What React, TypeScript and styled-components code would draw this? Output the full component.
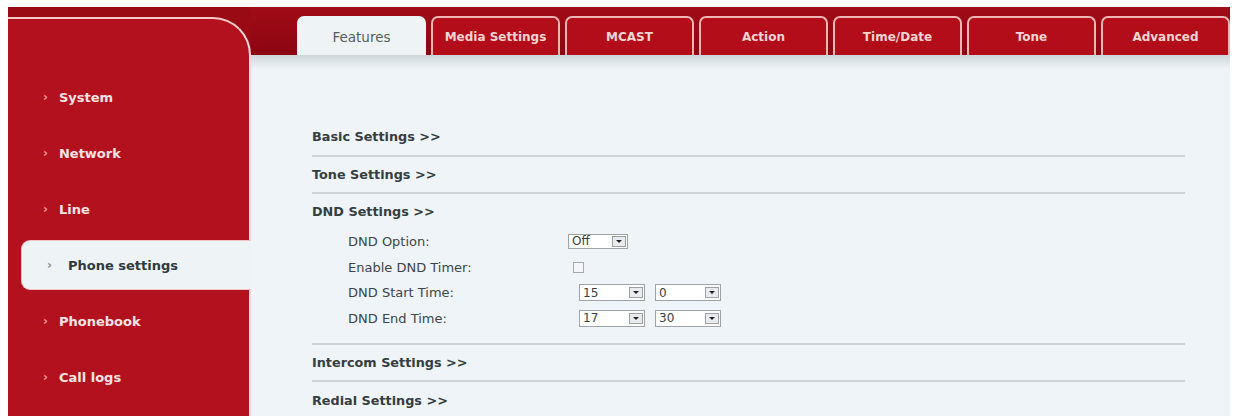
import styled, { createGlobalStyle } from 'styled-components'

const GlobalStyle = createGlobalStyle`
  html, body {
    margin: 0;
    padding: 0;
    background: #ffffff;
    font-family: "DejaVu Sans", Verdana, sans-serif;
  }
`

const StyledFrame = styled.div`
  margin: 7px 4px 0 8px;
  height: 409px;
  display: flex;
  flex-direction: row;
  background: #990a15;
  overflow: hidden;
`
const StyledSidebar = styled.nav`
  width: 243px;
  flex-shrink: 0;
  margin-top: 10px;
  padding-top: 50px;
  box-sizing: border-box;
  background: #b4111e;
  border-top: 2px solid #f6c9c9;
  border-right: 2px solid #f6dcdc;
  border-top-right-radius: 38px;
  display: flex;
  flex-direction: column;
`
const StyledNavItem = styled.div<{ $active?: boolean }>`
  height: ${({ $active }) => ($active ? '48px' : '56px')};
  margin: ${({ $active }) => ($active ? '4px -2px 4px 14px' : '0')};
  padding-left: ${({ $active }) => ($active ? '25px' : '35px')};
  display: flex;
  align-items: center;
  gap: ${({ $active }) => ($active ? '16px' : '11px')};
  font-size: 13px;
  font-weight: 700;
  color: ${({ $active }) => ($active ? '#2f3a3c' : '#f8e4e4')};
  background: ${({ $active }) => ($active ? '#eef3f6' : 'transparent')};
  border-radius: ${({ $active }) => ($active ? '8px 0 0 8px' : '0')};
  box-shadow: ${({ $active }) => ($active ? '0 0 0 1px #f3c4c4' : 'none')};
`
const StyledChevron = styled.span<{ $active?: boolean }>`
  font-size: 12px;
  font-weight: 700;
  color: ${({ $active }) => ($active ? '#8a8f90' : '#f39a9a')};
`
const StyledMain = styled.div`
  flex: 1;
  display: flex;
  flex-direction: column;
  min-width: 0;
`
const StyledTabBar = styled.div`
  height: 48px;
  flex-shrink: 0;
  box-sizing: border-box;
  padding: 9px 0 0 46px;
  display: flex;
  align-items: flex-end;
  gap: 5px;
  background: linear-gradient(180deg, #a00c17 0%, #8c0511 100%);
`
const StyledTab = styled.div<{ $active?: boolean }>`
  width: 129px;
  height: 39px;
  box-sizing: border-box;
  display: flex;
  align-items: center;
  justify-content: center;
  font-size: ${({ $active }) => ($active ? '13.5px' : '12px')};
  font-weight: ${({ $active }) => ($active ? 400 : 700)};
  color: ${({ $active }) => ($active ? '#555d60' : '#f6d4d4')};
  background: ${({ $active }) => ($active ? '#eef3f6' : '#b20d19')};
  border: 2px solid ${({ $active }) => ($active ? '#eef3f6' : '#f2b5b5')};
  border-bottom: none;
  border-radius: 7px 7px 0 0;
`
const StyledContent = styled.div`
  flex: 1;
  padding: 64px 45px 0 61px;
  background: linear-gradient(180deg, #cfd7da 0px, #eef4f7 14px, #eef4f7 100%);
  color: #333b3d;
`
const StyledSectionHeader = styled.div<{ $divider?: boolean }>`
  height: 35.5px;
  display: flex;
  align-items: center;
  font-size: 12.8px;
  font-weight: 700;
  color: #343e40;
  border-bottom: ${({ $divider }) => ($divider ? '2px solid #cdd3d6' : 'none')};
`
const StyledFieldList = styled.div`
  padding: 0 0 11.5px 36px;
  margin-top: -1px;
  border-bottom: 2px solid #cdd3d6;
`
const StyledFieldRow = styled.div`
  height: 25.7px;
  display: flex;
  align-items: center;
  font-size: 13px;
  color: #3d4547;
`
const StyledLabel = styled.span`
  width: 220px;
  flex-shrink: 0;
`
const StyledControls = styled.div<{ $offset?: number }>`
  display: flex;
  align-items: center;
  gap: 10px;
  margin-left: ${({ $offset }) => $offset ?? 0}px;
`
const StyledSelect = styled.div<{ $width: number; $height: number }>`
  width: ${({ $width }) => $width}px;
  height: ${({ $height }) => $height}px;
  box-sizing: border-box;
  display: flex;
  align-items: center;
  justify-content: space-between;
  padding: 0 1px 0 3px;
  background: #ffffff;
  border: 1px solid #9ea3a5;
  font-size: 12px;
  color: #3a3f41;
`
const StyledArrowBox = styled.span`
  width: 14px;
  height: 11px;
  box-sizing: border-box;
  display: flex;
  align-items: center;
  justify-content: center;
  background: #e9ecee;
  border: 1px solid #9a9fa1;
  &::after {
    content: '';
    border-left: 3px solid transparent;
    border-right: 3px solid transparent;
    border-top: 3px solid #222;
  }
`
const StyledCheckbox = styled.span`
  width: 11px;
  height: 11px;
  box-sizing: border-box;
  background: #f3f5f6;
  border: 1px solid #a5aaac;
`

const tabs = ['Features', 'Media Settings', 'MCAST', 'Action', 'Time/Date', 'Tone', 'Advanced']
const navItems = ['System', 'Network', 'Line', 'Phone settings', 'Phonebook', 'Call logs']

function Select({ value, width, height }: { value: string; width: number; height: number }) {
  return (
    <StyledSelect $width={width} $height={height}>
      {value}
      <StyledArrowBox />
    </StyledSelect>
  )
}

function App() {
  return (
    <>
      <GlobalStyle />
      <StyledFrame>
        <StyledSidebar>
          {navItems.map((item) => (
            <StyledNavItem key={item} $active={item === 'Phone settings'}>
              <StyledChevron $active={item === 'Phone settings'}>›</StyledChevron>
              {item}
            </StyledNavItem>
          ))}
        </StyledSidebar>
        <StyledMain>
          <StyledTabBar>
            {tabs.map((tab) => (
              <StyledTab key={tab} $active={tab === 'Features'}>{tab}</StyledTab>
            ))}
          </StyledTabBar>
          <StyledContent>
            <StyledSectionHeader $divider>Basic Settings &gt;&gt;</StyledSectionHeader>
            <StyledSectionHeader $divider>Tone Settings &gt;&gt;</StyledSectionHeader>
            <StyledSectionHeader>DND Settings &gt;&gt;</StyledSectionHeader>
            <StyledFieldList>
              <StyledFieldRow>
                <StyledLabel>DND Option:</StyledLabel>
                <StyledControls>
                  <Select value="Off" width={60} height={15} />
                </StyledControls>
              </StyledFieldRow>
              <StyledFieldRow>
                <StyledLabel>Enable DND Timer:</StyledLabel>
                <StyledControls $offset={5}>
                  <StyledCheckbox />
                </StyledControls>
              </StyledFieldRow>
              <StyledFieldRow>
                <StyledLabel>DND Start Time:</StyledLabel>
                <StyledControls $offset={11}>
                  <Select value="15" width={66} height={17} />
                  <Select value="0" width={66} height={17} />
                </StyledControls>
              </StyledFieldRow>
              <StyledFieldRow>
                <StyledLabel>DND End Time:</StyledLabel>
                <StyledControls $offset={11}>
                  <Select value="17" width={66} height={17} />
                  <Select value="30" width={66} height={17} />
                </StyledControls>
              </StyledFieldRow>
            </StyledFieldList>
            <StyledSectionHeader $divider>Intercom Settings &gt;&gt;</StyledSectionHeader>
            <StyledSectionHeader>Redial Settings &gt;&gt;</StyledSectionHeader>
          </StyledContent>
        </StyledMain>
      </StyledFrame>
    </>
  )
}

export default App
